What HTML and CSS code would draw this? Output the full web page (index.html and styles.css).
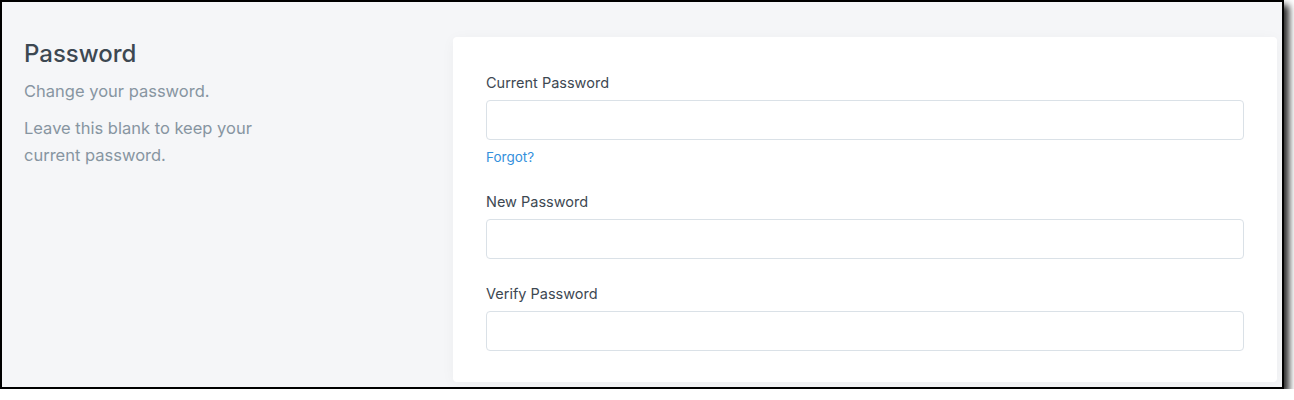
FILE: index.html
```html
<!DOCTYPE html>
<html lang="en">
<head>
    <meta charset="UTF-8">
    <meta name="viewport" content="width=device-width, initial-scale=1.0">
    <title>Password</title>
    <link rel="stylesheet" href="styles.css">
</head>
<body>

<div class="frame">
    <div class="section">
        <div class="intro">
            <h2>Password</h2>
            <p>Change your password.</p>
            <p>Leave this blank to keep your current password.</p>
        </div>

        <div class="card">
            <div class="field">
                <label for="current">Current Password</label>
                <input type="password" id="current">
                <a href="#" class="forgot">Forgot?</a>
            </div>

            <div class="field">
                <label for="new">New Password</label>
                <input type="password" id="new">
            </div>

            <div class="field">
                <label for="verify">Verify Password</label>
                <input type="password" id="verify">
            </div>
        </div>
    </div>
</div>

</body>
</html>
```

FILE: styles.css
```css
body {
    margin: 0;
    font-family: Inter, "Noto Sans", sans-serif;
    background-color: #fff;
}
.frame {
    width: 1280px;
    height: 385px;
    border: 2px solid #000;
    background-color: #f5f6f8;
    box-shadow: 5px 5px 7px rgba(0, 0, 0, 0.85);
    overflow: hidden;
}
.section {
    display: flex;
    align-items: flex-start;
    padding: 35px 5px 0 22px;
}
.intro {
    width: 429px;
    flex-shrink: 0;
}
.intro h2 {
    margin: 0;
    padding-top: 2px;
    font-size: 24px;
    font-weight: 500;
    line-height: 30px;
    color: #3d4852;
}
.intro p {
    width: 270px;
    margin: 9px 0 0;
    font-size: 16.5px;
    line-height: 27px;
    color: #8795a1;
}
.intro p + p {
    margin-top: 10px;
}
.card {
    flex: 1;
    background-color: #fff;
    border-radius: 4px;
    box-shadow: 0 2px 14px rgba(0, 0, 0, 0.04);
    padding: 35px 33px 31px;
}
.field {
    margin-bottom: 24px;
}
.field:last-child {
    margin-bottom: 0;
}
label {
    display: block;
    font-size: 14.5px;
    line-height: 22px;
    color: #3d4852;
    margin-bottom: 6px;
}
input {
    display: block;
    box-sizing: border-box;
    width: 100%;
    height: 40px;
    margin: 0;
    border: 1px solid #dae1e7;
    border-radius: 4px;
    background-color: #fff;
}
.forgot {
    display: block;
    width: max-content;
    margin-top: 7px;
    font-size: 13.5px;
    line-height: 20px;
    color: #3490dc;
    text-decoration: none;
}
```
